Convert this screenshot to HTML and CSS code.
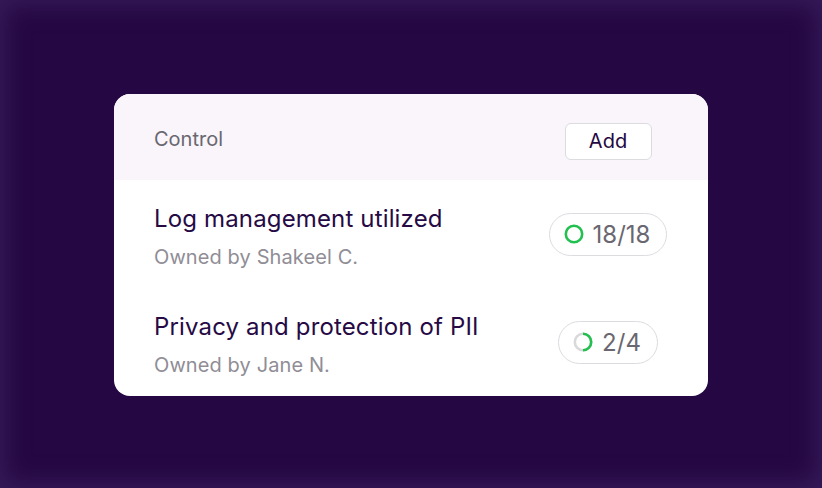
FILE: index.html
```html
<!DOCTYPE html>
<html>
<head>
<meta charset="utf-8">
<link rel="stylesheet" href="styles.css">
</head>
<body>
<div class="stage">
  <div class="card">
    <div class="head">
      <div class="head-label">Control</div>
      <div class="col"><button class="add">Add</button></div>
    </div>
    <div class="row">
      <div class="info">
        <div class="title">Log management utilized</div>
        <div class="owner">Owned by Shakeel C.</div>
      </div>
      <div class="col">
        <div class="pill">
          <svg class="ring" width="20" height="20" viewBox="0 0 20 20">
            <circle cx="10" cy="10" r="8.2" fill="none" stroke="#22c04e" stroke-width="2.6"/>
          </svg>
          <span>18/18</span>
        </div>
      </div>
    </div>
    <div class="row">
      <div class="info">
        <div class="title">Privacy and protection of PII</div>
        <div class="owner">Owned by Jane N.</div>
      </div>
      <div class="col">
        <div class="pill">
          <svg class="ring" width="20" height="20" viewBox="0 0 20 20">
            <circle cx="10" cy="10" r="8.2" fill="none" stroke="#d9d9dc" stroke-width="2.6"/>
            <path d="M10 1.8 A8.2 8.2 0 0 1 10 18.2" fill="none" stroke="#22c04e" stroke-width="2.6"/>
          </svg>
          <span>2/4</span>
        </div>
      </div>
    </div>
  </div>
</div>
</body>
</html>
```
FILE: styles.css
```css
* { box-sizing: border-box; }
html, body { margin: 0; padding: 0; }
body {
  width: 822px;
  height: 488px;
  background: #250843;
  font-family: Inter, "Noto Sans", sans-serif;
  overflow: hidden;
}
.stage {
  width: 822px;
  height: 488px;
  padding: 94px 114px 92px 114px;
  box-shadow: inset 0 0 22px 6px #351a58;
}
.card {
  width: 594px;
  height: 302px;
  background: #ffffff;
  border-radius: 16px;
  overflow: hidden;
}
.head {
  height: 86px;
  background: #f9f5fb;
  display: grid;
  grid-template-columns: 1fr 120px;
  align-items: center;
  padding: 8px 40px 0 40px;
}
.head-label {
  font-size: 20px;
  color: #6a6770;
  padding-bottom: 5px;
}
.col {
  display: flex;
  justify-content: center;
}
.add {
  width: 87px;
  height: 37px;
  border: 1.5px solid #dcdbe0;
  border-radius: 6px;
  background: #ffffff;
  font-family: inherit;
  font-size: 20px;
  color: #250843;
  padding: 0;
}
.row {
  height: 108px;
  display: grid;
  grid-template-columns: 1fr 120px;
  align-items: center;
  padding: 0 40px;
}
.info {
  padding-top: 4px;
}
.title {
  font-size: 24px;
  line-height: 30px;
  letter-spacing: 0.15px;
  color: #260a45;
}
.owner {
  margin-top: 11px;
  font-size: 20px;
  line-height: 24px;
  letter-spacing: 0.1px;
  color: #908d96;
}
.pill {
  display: flex;
  align-items: center;
  gap: 9px;
  height: 43px;
  padding: 0 16px 0 14px;
  border: 1.5px solid #dcdbe0;
  border-radius: 22px;
  font-size: 24px;
  color: #6a6770;
}
.ring { display: block; }
```
